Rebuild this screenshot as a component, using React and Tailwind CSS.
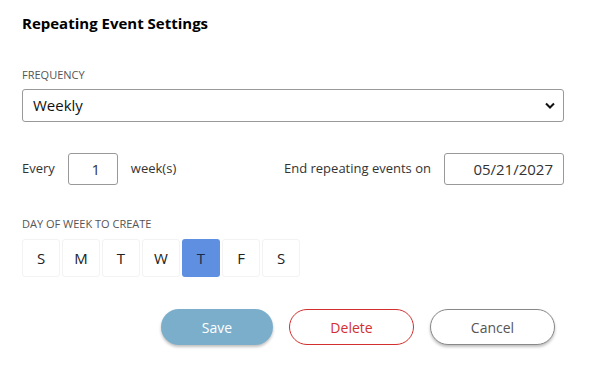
const days = ['S', 'M', 'T', 'W', 'T', 'F', 'S'];

export default function App() {
  const selected = 4;

  return (
    <div className="w-[590px] h-[367px] bg-white text-[#222] font-['Open_Sans',sans-serif]">
      <div className="pl-[22px] pr-[26px] pt-[12px]">
        <h1 className="text-[15px] font-bold text-black leading-[22px]">Repeating Event Settings</h1>

        <div className="mt-[33px] text-[11px] text-[#555] leading-[16px]">FREQUENCY</div>
        <div className="mt-[6px] h-[33px] border border-[#999] rounded-[3px] flex items-center justify-between pl-[10px] pr-[8px]">
          <span className="text-[15px] text-[#111]">Weekly</span>
          <svg width="10" height="7" viewBox="0 0 10 7">
            <path d="M1 1.5 L5 5.5 L9 1.5" fill="none" stroke="#111" strokeWidth="2" />
          </svg>
        </div>

        <div className="mt-[31px] flex items-center justify-between h-[32px]">
          <div className="flex items-center">
            <span className="text-[13px] text-[#333]">Every</span>
            <div className="ml-[13px] w-[50px] h-[32px] border border-[#999] rounded-[3px] flex items-center justify-center pl-[6px] text-[15px] text-[#333]">1</div>
            <span className="ml-[13px] text-[13px] text-[#333]">week(s)</span>
          </div>
          <div className="flex items-center">
            <span className="text-[13px] text-[#333]">End repeating events on</span>
            <div className="ml-[13px] w-[120px] h-[32px] border border-[#999] rounded-[3px] flex items-center justify-end pr-[10px] text-[15px] text-[#333]">05/21/2027</div>
          </div>
        </div>

        <div className="mt-[31px] text-[11px] text-[#555] leading-[16px]">DAY OF WEEK TO CREATE</div>
        <div className="mt-[7px] flex gap-[2px]">
          {days.map((d, i) => (
            <div
              key={i}
              className={
                i === selected
                  ? 'w-[38px] h-[38px] rounded-[3px] bg-[#5f8fe0] flex items-center justify-center text-[15px] text-[#1a2a4a]'
                  : 'w-[38px] h-[38px] rounded-[3px] border border-[#f3f3f3] flex items-center justify-center text-[15px] text-[#222]'
              }
            >
              {d}
            </div>
          ))}
        </div>

        <div className="mt-[32px] flex pl-[139px] gap-[16px]">
          <button className="w-[112px] h-[36px] rounded-full bg-[#7aaecb] text-white text-[14px] shadow-[0_2px_3px_rgba(0,0,0,0.25)]">Save</button>
          <button className="w-[125px] h-[36px] rounded-full border border-[#d32f2f] bg-white text-[#d32f2f] text-[14px]">Delete</button>
          <button className="w-[125px] h-[36px] rounded-full border border-[#888] bg-white text-[#555] text-[14px] shadow-[0_2px_3px_rgba(0,0,0,0.25)]">Cancel</button>
        </div>
      </div>
    </div>
  );
}
